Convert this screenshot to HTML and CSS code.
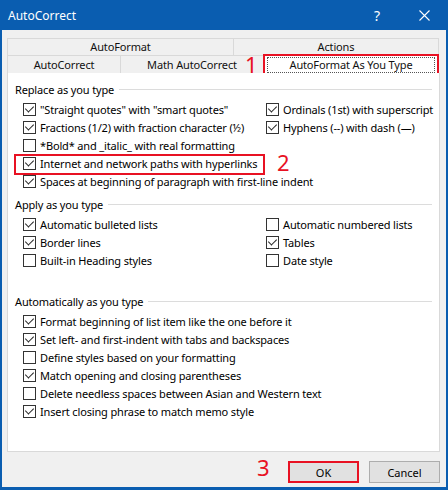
FILE: index.html
```html
<!DOCTYPE html>
<html lang="en">
<head>
    <meta charset="UTF-8">
    <title>AutoCorrect</title>
    <link rel="stylesheet" href="styles.css">
</head>
<body>
    <div class="dialog">
        <header class="titlebar">
            <span class="title">AutoCorrect</span>
            <span class="help">?</span>
            <span class="close">
                <svg width="11" height="11" viewBox="0 0 11 11"><path d="M0.5 0.5 L10.5 10.5 M10.5 0.5 L0.5 10.5" stroke="#fff" stroke-width="1.1" fill="none"/></svg>
            </span>
        </header>

        <div class="body">
            <nav class="tabs">
                <div class="tab-row">
                    <div class="tab tab-autoformat">AutoFormat</div>
                    <div class="tab tab-actions">Actions</div>
                </div>
                <div class="tab-row">
                    <div class="tab tab-autocorrect">AutoCorrect</div>
                    <div class="tab tab-math">Math AutoCorrect</div>
                    <div class="tab tab-asyoutype selected"><span class="focus">AutoFormat As You Type</span></div>
                </div>
            </nav>

            <main class="panel">
                <section class="group group-replace">
                    <div class="group-title"><span>Replace as you type</span></div>
                    <div class="options two-col">
                        <label class="opt"><span class="cb checked"></span>"Straight quotes" with "smart quotes"</label>
                        <label class="opt"><span class="cb checked"></span>Ordinals (1st) with superscript</label>
                        <label class="opt"><span class="cb checked"></span>Fractions (1/2) with fraction character (½)</label>
                        <label class="opt"><span class="cb checked"></span>Hyphens (--) with dash (—)</label>
                        <label class="opt wide"><span class="cb"></span>*Bold* and _italic_ with real formatting</label>
                        <label class="opt wide"><span class="cb checked"></span>Internet and network paths with hyperlinks</label>
                        <label class="opt wide"><span class="cb checked"></span>Spaces at beginning of paragraph with first-line indent</label>
                    </div>
                </section>

                <section class="group group-apply">
                    <div class="group-title"><span>Apply as you type</span></div>
                    <div class="options two-col">
                        <label class="opt"><span class="cb checked"></span>Automatic bulleted lists</label>
                        <label class="opt"><span class="cb"></span>Automatic numbered lists</label>
                        <label class="opt"><span class="cb checked"></span>Border lines</label>
                        <label class="opt"><span class="cb checked"></span>Tables</label>
                        <label class="opt"><span class="cb"></span>Built-in Heading styles</label>
                        <label class="opt"><span class="cb"></span>Date style</label>
                    </div>
                </section>

                <section class="group group-auto">
                    <div class="group-title"><span>Automatically as you type</span></div>
                    <div class="options">
                        <label class="opt"><span class="cb checked"></span>Format beginning of list item like the one before it</label>
                        <label class="opt"><span class="cb checked"></span>Set left- and first-indent with tabs and backspaces</label>
                        <label class="opt"><span class="cb"></span>Define styles based on your formatting</label>
                        <label class="opt"><span class="cb checked"></span>Match opening and closing parentheses</label>
                        <label class="opt"><span class="cb"></span>Delete needless spaces between Asian and Western text</label>
                        <label class="opt"><span class="cb checked"></span>Insert closing phrase to match memo style</label>
                    </div>
                </section>
            </main>

            <footer class="buttons">
                <button class="btn btn-ok">OK</button>
                <button class="btn">Cancel</button>
            </footer>
        </div>

        <!-- red annotation marks -->
        <span class="mark mark-1">1</span>
        <span class="mark mark-2">2</span>
        <span class="mark mark-3">3</span>
        <span class="mark-box box-2"></span>
    </div>
</body>
</html>
```

FILE: styles.css
```css
body {
    margin: 0;
    padding: 0;
    font-family: "Noto Sans", "Open Sans", sans-serif;
    font-size: 11px;
    letter-spacing: -0.15px;
    color: #000;
}
.dialog {
    position: relative;
    width: 448px;
    height: 490px;
    box-sizing: border-box;
    background-color: #f0f0f0;
    border: 2px solid #0a5db0;
    border-top: none;
    border-bottom-width: 3px;
    display: flex;
    flex-direction: column;
}
.titlebar {
    height: 30px;
    margin: 0 -2px;
    background-color: #0a5db0;
    color: #fff;
    display: flex;
    align-items: center;
    flex-shrink: 0;
    letter-spacing: 0;
}
.title {
    margin-left: 8px;
    font-size: 12px;
    flex: 1;
}
.help {
    font-size: 14px;
    width: 12px;
    margin-right: 33px;
}
.close {
    width: 11px;
    height: 11px;
    margin-right: 18px;
    display: flex;
}
.body {
    flex: 1;
    padding: 8px 6px 0 5px;
    display: flex;
    flex-direction: column;
}

/* tabs */
.tabs {
    width: 432px;
}
.tab-row {
    display: flex;
}
.tab {
    box-sizing: border-box;
    height: 17px;
    line-height: 16px;
    text-align: center;
    border: 1px solid #d9d9d9;
    border-bottom: none;
    border-right: none;
    background-color: #f0f0f0;
    color: #111;
}
.tab-row + .tab-row .tab {
    height: 18px;
    line-height: 17px;
}
.tab-autoformat { width: 226px; }
.tab-actions { width: 206px; border-right: 1px solid #d9d9d9; }
.tab-autocorrect { width: 113px; }
.tab-math { width: 143px; }
.tab-asyoutype {
    width: 176px;
    margin-top: -1px;
    height: 19px !important;
}
.tab.selected {
    background-color: #fff;
    border: 2px solid #e81123;
    border-bottom: none;
    padding: 1px 2px 0;
}
.tab .focus {
    display: block;
    border: 1px dotted #555;
    line-height: 14px;
    height: 14px;
}

/* main panel */
.panel {
    width: 433px;
    height: 379px;
    box-sizing: border-box;
    background-color: #fff;
    border: 1px solid #d9d9d9;
    border-top: none;
    padding: 7px 7px 0 7px;
}
.group-title {
    height: 18px;
    display: flex;
    align-items: center;
    margin-bottom: 2px;
}
.group-title::after {
    content: "";
    flex: 1;
    height: 1px;
    margin-left: 5px;
    background-color: #dcdcdc;
}
.group-apply { margin-top: 5px; }
.group-auto { margin-top: 23px; }
.options {
    padding-left: 8px;
}
.two-col {
    display: grid;
    grid-template-columns: 243px 1fr;
}
.wide {
    grid-column: 1 / -1;
}
.opt {
    height: 18px;
    display: flex;
    align-items: center;
    white-space: nowrap;
}
.cb {
    width: 13px;
    height: 13px;
    box-sizing: border-box;
    border: 1px solid #333;
    background-color: #fff;
    margin-right: 4px;
    flex-shrink: 0;
    position: relative;
}
.cb.checked::after {
    content: "";
    position: absolute;
    left: 3px;
    top: 0px;
    width: 4px;
    height: 7px;
    border: solid #222;
    border-width: 0 1px 1px 0;
    transform: rotate(45deg);
}

/* footer buttons */
.buttons {
    display: flex;
    justify-content: flex-end;
    gap: 10px;
    padding-top: 9px;
    padding-right: 0;
}
.btn {
    width: 71px;
    height: 22px;
    box-sizing: border-box;
    background-color: #e1e1e1;
    border: 1px solid #adadad;
    font-family: inherit;
    font-size: 11px;
    color: #000;
    padding: 0;
}
.btn-ok {
    border: 2px solid #e81123;
}

/* annotations */
.mark {
    position: absolute;
    color: #e81123;
    font-family: "Noto Sans", sans-serif;
    font-size: 22px;
    line-height: 16px;
    letter-spacing: 0;
}
.mark-1 { left: 243px; top: 56px; }
.mark-2 { left: 275px; top: 154px; }
.mark-3 { left: 255px; top: 459px; }
.mark-box {
    position: absolute;
    box-sizing: border-box;
    border: 2px solid #e81123;
}
.box-2 {
    left: 12px;
    top: 154px;
    width: 251px;
    height: 21px;
}
```
